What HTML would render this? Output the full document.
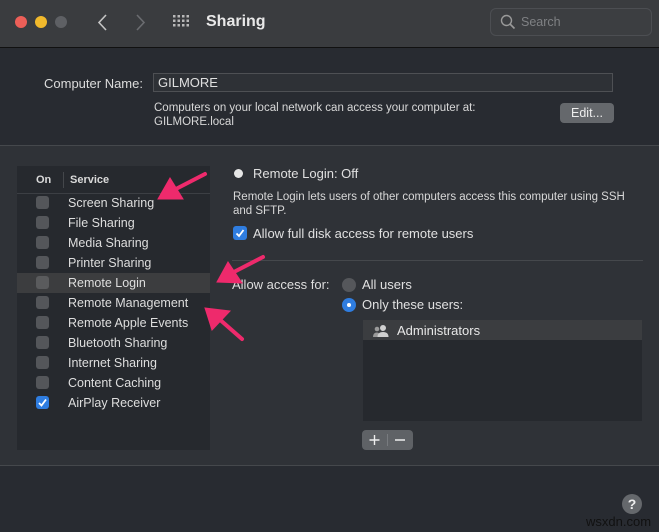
<!DOCTYPE html>
<html><head><style>
*{margin:0;padding:0;box-sizing:border-box}
body{width:659px;height:532px;background:#282b31;font-family:"Liberation Sans",sans-serif;color:#dcdcdc;position:relative;overflow:hidden;font-size:12.5px}
.a{position:absolute}
.tb{left:0;top:0;width:659px;height:48px;background:#3a3c3f;border-bottom:1px solid #111}
.cb{width:13px;height:13px;border-radius:3px;background:#54565a;position:absolute}
.row{position:absolute;left:68px;font-size:12.5px;color:#dedede}
</style></head><body>
<div class="a tb"></div>
<div class="a" style="left:15px;top:16px;width:12px;height:12px;border-radius:6px;background:#ec5f58"></div>
<div class="a" style="left:35px;top:16px;width:12px;height:12px;border-radius:6px;background:#f1b92c"></div>
<div class="a" style="left:55px;top:16px;width:12px;height:12px;border-radius:6px;background:#5e6064"></div>
<svg class="a" style="left:95px;top:12px" width="60" height="22"><path d="M11 3 L4 10.5 L11 18" stroke="#c4c4c4" stroke-width="1.6" fill="none"/><path d="M42 3 L49 10.5 L42 18" stroke="#6a6c70" stroke-width="1.6" fill="none"/></svg>
<svg class="a" style="left:173px;top:15px" width="18" height="14" fill="#b8b8b8"><g id="r"><rect x="0" y="0" width="2.5" height="2.5"/><rect x="4.5" y="0" width="2.5" height="2.5"/><rect x="9" y="0" width="2.5" height="2.5"/><rect x="13.5" y="0" width="2.5" height="2.5"/></g><use href="#r" y="4.5"/><use href="#r" y="9"/></svg>
<div class="a" style="left:206px;top:13px;font-size:16px;font-weight:bold;color:#e8e8e8">Sharing</div>
<div class="a" style="left:490px;top:8px;width:162px;height:28px;border:1px solid #4c4e52;border-radius:6px;background:#3c3e41"></div>
<svg class="a" style="left:500px;top:14px" width="16" height="16"><circle cx="6.5" cy="6.5" r="5" stroke="#9a9a9a" stroke-width="1.4" fill="none"/><path d="M10 10 L14.5 14.5" stroke="#9a9a9a" stroke-width="1.6"/></svg>
<div class="a" style="left:521px;top:15px;color:#7f8184;font-size:12.5px">Search</div>

<div class="a" style="left:44px;top:76px;font-size:13px;color:#dcdcdc">Computer Name:</div>
<div class="a" style="left:153px;top:73px;width:460px;height:19px;border:1px solid #4e5054;background:#2e3136"></div>
<div class="a" style="left:158px;top:75px;font-size:13px;color:#e0e0e0">GILMORE</div>
<div class="a" style="left:154px;top:101px;font-size:11.5px;line-height:14px;color:#d8d8d8">Computers on your local network can access your computer at:<br>GILMORE.local</div>
<div class="a" style="left:560px;top:103px;width:54px;height:20px;border-radius:4px;background:#65686c;color:#eee;font-size:12.5px;text-align:center;line-height:20px">Edit...</div>

<div class="a" style="left:0;top:145px;width:659px;height:321px;background:#2f3237;border-top:1px solid #45484c;border-bottom:1px solid #45484c"></div>
<div class="a" style="left:17px;top:166px;width:193px;height:284px;background:#26292e"></div>
<div class="a" style="left:17px;top:193px;width:193px;height:1px;background:#3c3f44"></div>
<div class="a" style="left:63px;top:172px;width:1px;height:16px;background:#44474b"></div>
<div class="a" style="left:36px;top:174px;font-size:11px;font-weight:bold;color:#dadada">On</div>
<div class="a" style="left:70px;top:174px;font-size:11px;font-weight:bold;color:#dadada">Service</div>
<div class="a" style="left:17px;top:273px;width:193px;height:20px;background:#3c3d3f"></div>

<div class="cb" style="left:36px;top:196px"></div><div class="row" style="top:196px">Screen Sharing</div>
<div class="cb" style="left:36px;top:216px"></div><div class="row" style="top:216px">File Sharing</div>
<div class="cb" style="left:36px;top:236px"></div><div class="row" style="top:236px">Media Sharing</div>
<div class="cb" style="left:36px;top:256px"></div><div class="row" style="top:256px">Printer Sharing</div>
<div class="cb" style="left:36px;top:276px;background:#5a5b5d"></div><div class="row" style="top:276px">Remote Login</div>
<div class="cb" style="left:36px;top:296px"></div><div class="row" style="top:296px">Remote Management</div>
<div class="cb" style="left:36px;top:316px"></div><div class="row" style="top:316px">Remote Apple Events</div>
<div class="cb" style="left:36px;top:336px"></div><div class="row" style="top:336px">Bluetooth Sharing</div>
<div class="cb" style="left:36px;top:356px"></div><div class="row" style="top:356px">Internet Sharing</div>
<div class="cb" style="left:36px;top:376px"></div><div class="row" style="top:376px">Content Caching</div>
<div class="cb" style="left:36px;top:396px;background:#2f7de0"></div><svg class="a" style="left:36px;top:396px" width="13" height="13"><path d="M3 7 L5.5 9.5 L10 3.5" stroke="#fff" stroke-width="1.8" fill="none"/></svg><div class="row" style="top:396px">AirPlay Receiver</div>

<div class="a" style="left:234px;top:169px;width:9px;height:9px;border-radius:5px;background:#e6e6e6"></div>
<div class="a" style="left:253px;top:166px;font-size:13px;color:#e0e0e0">Remote Login: Off</div>
<div class="a" style="left:233px;top:190px;font-size:11.5px;line-height:14px;color:#d8d8d8">Remote Login lets users of other computers access this computer using SSH<br>and SFTP.</div>
<div class="a" style="left:233px;top:226px;width:14px;height:14px;border-radius:3px;background:#2f7de0"></div><svg class="a" style="left:233px;top:226px" width="14" height="14"><path d="M3.5 7.5 L6 10 L10.5 4" stroke="#fff" stroke-width="1.8" fill="none"/></svg>
<div class="a" style="left:253px;top:226px;font-size:13px;color:#e0e0e0">Allow full disk access for remote users</div>
<div class="a" style="left:232px;top:260px;width:411px;height:1px;background:#45484c"></div>
<div class="a" style="left:232px;top:277px;font-size:13px;color:#dedede">Allow access for:</div>
<div class="a" style="left:342px;top:278px;width:14px;height:14px;border-radius:7px;background:#55575b"></div>
<div class="a" style="left:362px;top:277px;font-size:13px;color:#e0e0e0">All users</div>
<div class="a" style="left:342px;top:298px;width:14px;height:14px;border-radius:7px;background:#2f7de0"></div>
<div class="a" style="left:347px;top:303px;width:4px;height:4px;border-radius:2px;background:#fff"></div>
<div class="a" style="left:362px;top:297px;font-size:13px;color:#e0e0e0">Only these users:</div>
<div class="a" style="left:363px;top:320px;width:279px;height:101px;background:#26292e"></div>
<div class="a" style="left:363px;top:320px;width:279px;height:20px;background:#3b3d40"></div>
<svg class="a" style="left:372px;top:324px" width="18" height="14" fill="#d0d0d0"><circle cx="5" cy="5" r="2.3" fill="#9a9a9a"/><path d="M1 13 Q1 8.5 5 8.5 Q8 8.5 8 13Z" fill="#9a9a9a"/><circle cx="11" cy="4" r="3"/><path d="M5.5 13 Q5.5 8 11 8 Q16.5 8 16.5 13Z"/></svg>
<div class="a" style="left:397px;top:323px;font-size:13px;color:#e8e8e8">Administrators</div>
<div class="a" style="left:362px;top:430px;width:51px;height:20px;border-radius:4px;background:#5f6266"></div>
<div class="a" style="left:387px;top:434px;width:1px;height:12px;background:#787b7f"></div>
<svg class="a" style="left:362px;top:430px" width="51" height="20"><path d="M7.5 10h10M12.5 5v10M33 10h10" stroke="#eee" stroke-width="1.4"/></svg>

<div class="a" style="left:622px;top:494px;width:20px;height:20px;border-radius:10px;background:#65686c;color:#eee;font-weight:bold;font-size:14px;text-align:center;line-height:20px">?</div>
<div class="a" style="left:586px;top:514px;font-size:13px;color:#111">wsxdn.com</div>

<svg class="a" style="left:0;top:0" width="659" height="532">
<g fill="#ee2a6c" stroke="#ee2a6c" stroke-linecap="round">
<line x1="205" y1="174" x2="172" y2="191" stroke-width="4"/>
<polygon points="158,199 170,178 183,199" stroke-width="1"/>
<line x1="263" y1="257" x2="230" y2="274" stroke-width="4"/>
<polygon points="217,282 228,262 242,283" stroke-width="1"/>
<line x1="242" y1="339" x2="218" y2="318" stroke-width="4"/>
<polygon points="205,308 230,311 212,330" stroke-width="1"/>
</g></svg>
</body></html>
